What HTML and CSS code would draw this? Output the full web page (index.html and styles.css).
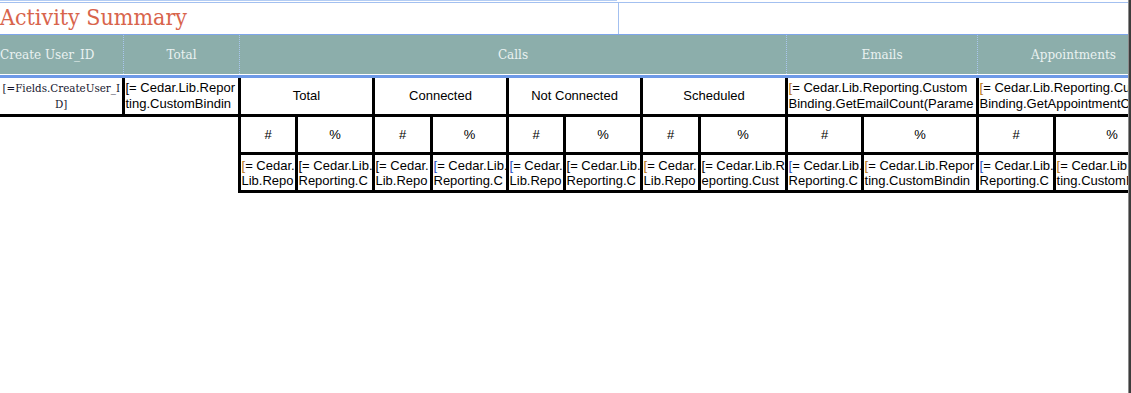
FILE: index.html
```
<!DOCTYPE html>
<html lang="en">
<head>
  <meta charset="UTF-8">
  <meta name="viewport" content="width=device-width, initial-scale=1.0">
  <title>Activity Summary</title>
  <link rel="stylesheet" href="styles.css">
</head>
<body>
  <div class="designer">
    <div class="canvas">
      <div class="sel-line"></div>

      <!-- report header -->
      <div class="title-row">
        <div class="title-box"><h1>Activity Summary</h1></div>
        <div class="title-rest"></div>
      </div>

      <!-- column group headers -->
      <div class="band">
        <div class="band-cell first">Create User_ID</div>
        <div class="band-cell">Total</div>
        <div class="band-cell">Calls</div>
        <div class="band-cell">Emails</div>
        <div class="band-cell">Appointments</div>
      </div>

      <table class="report">
        <colgroup>
          <col class="col-user">
          <col class="col-total">
          <col class="col-57"><col class="col-77">
          <col class="col-58"><col class="col-76">
          <col class="col-57"><col class="col-77">
          <col class="col-58"><col class="col-87">
          <col class="col-76"><col class="col-115">
          <col class="col-77"><col class="col-115">
        </colgroup>
        <tr class="row-group">
          <td class="field">[=Fields.CreateUser_I<br>D]</td>
          <td class="expr">[= Cedar.Lib.Repor<br>ting.CustomBindin</td>
          <td colspan="2" class="label">Total</td>
          <td colspan="2" class="label">Connected</td>
          <td colspan="2" class="label">Not Connected</td>
          <td colspan="2" class="label">Scheduled</td>
          <td colspan="2" class="expr"><span class="tk-o">[</span>= Cedar.Lib.Reporting.Custom<br>Binding.GetEmailCount(Parame</td>
          <td colspan="2" class="expr"><span class="tk-o">[</span>= Cedar.Lib.Reporting.Custom<br>Binding.GetAppointmentCount(</td>
        </tr>
        <tr class="row-sub">
          <td colspan="2" rowspan="2" class="blank"></td>
          <td class="label">#</td><td class="label">%</td>
          <td class="label">#</td><td class="label">%</td>
          <td class="label">#</td><td class="label">%</td>
          <td class="label">#</td><td class="label">%</td>
          <td class="label">#</td><td class="label">%</td>
          <td class="label">#</td><td class="label">%</td>
        </tr>
        <tr class="row-data">
          <td class="expr"><span class="tk-o">[</span>= Cedar.<br>Lib.Repo</td>
          <td class="expr">[= Cedar.Lib.<br>Reporting.C</td>
          <td class="expr">[= Cedar.<br>Lib.Repo</td>
          <td class="expr"><span class="tk-b">[</span>= Cedar.Lib.<br>Reporting.C</td>
          <td class="expr"><span class="tk-b">[</span>= Cedar.<br>Lib.Repo</td>
          <td class="expr">[= Cedar.Lib.<br>Reporting.C</td>
          <td class="expr"><span class="tk-o">[</span>= Cedar.<br>Lib.Repo</td>
          <td class="expr">[= Cedar.Lib.R<br>eporting.Cust</td>
          <td class="expr"><span class="tk-b">[</span>= Cedar.Lib.<br>Reporting.C</td>
          <td class="expr"><span class="tk-o">[</span>= Cedar.Lib.Repor<br>ting.CustomBindin</td>
          <td class="expr"><span class="tk-b">[</span>= Cedar.Lib.<br>Reporting.C</td>
          <td class="expr"><span class="tk-o">[</span>= Cedar.Lib.Repor<br>ting.CustomBindin</td>
        </tr>
      </table>
    </div>
    <div class="edge"></div>
  </div>
</body>
</html>
```

FILE: styles.css
```
body {
  margin: 0;
  background: #fff;
  font-family: "Liberation Sans", Arial, sans-serif;
  overflow: hidden;
}
.designer {
  display: flex;
  height: 393px;
}
.canvas {
  width: 1128px;
  overflow: hidden;
  flex: none;
}
.edge {
  width: 2px;
  background: #3c3c3c;
  border-left: 1px solid #8c8c8c;
}

/* report header */
.sel-line {
  width: 617px;
  height: 1px;
  margin-bottom: 1px;
  background: #b4cdf4;
}
.title-row {
  display: flex;
  height: 31px;
  border-top: 1px solid #a3c0f0;
  border-bottom: 1px solid #7ea5ea;
}
.title-box {
  width: 618px;
  border-right: 1px solid #a3c0f0;
}
.title-box h1 {
  margin: 0;
  font-family: "DejaVu Serif", Georgia, serif;
  font-stretch: condensed;
  font-weight: normal;
  font-size: 23px;
  line-height: 29px;
  color: #d8644c;
  white-space: nowrap;
}
.title-rest {
  flex: 1;
}

/* group header band */
.band {
  display: grid;
  grid-template-columns: 123px 116px 547px 191px 192px;
  width: 1169px;
  padding-bottom: 1px;
  border-bottom: 3px solid #6e9ae8;
}
.band-cell {
  height: 39px;
  background: #8caeab;
  color: #eaf2f1;
  font-family: "DejaVu Serif", Georgia, serif;
  font-size: 12px;
  display: flex;
  align-items: center;
  justify-content: center;
  border-left: 1px dotted #a9c6ee;
  white-space: nowrap;
}
.band-cell.first {
  justify-content: flex-start;
  border-left: none;
}

/* detail table */
.report {
  border-collapse: collapse;
  table-layout: fixed;
  width: 1169px;
}
.col-user { width: 123px; }
.col-total { width: 116px; }
.col-57 { width: 57px; }
.col-58 { width: 58px; }
.col-76 { width: 76px; }
.col-77 { width: 77px; }
.col-87 { width: 87px; }
.col-115 { width: 115px; }

.report td {
  border: 3px solid #000;
  padding: 0 0 0 1px;
  font-size: 13px;
  color: #000;
  white-space: nowrap;
  overflow: hidden;
}
.row-group td {
  border-top: none;
  height: 36px;
  line-height: 16px;
}
.row-group td:first-child {
  border-left: none;
}
.row-sub td {
  height: 35px;
}
.row-data td {
  height: 35px;
  line-height: 15px;
}
.report td.blank {
  border-left: none;
  border-bottom: none;
}
.report td.label {
  text-align: center;
}
.report td.field {
  text-align: center;
  font-family: "DejaVu Serif", Georgia, serif;
  font-stretch: condensed;
  font-size: 11.5px;
  color: #15152e;
}
.tk-o { color: #b8730f; }
.tk-b { color: #1f4fc4; }
```
